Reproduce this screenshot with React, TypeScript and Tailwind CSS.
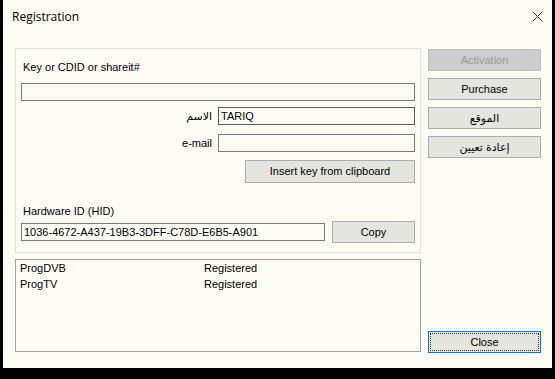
const body = "font-['Liberation_Sans','DejaVu_Sans',sans-serif]";

function Input({ w, value, dark }: { w: string; value?: string; dark?: boolean }) {
  return (
    <div
      className={`${w} h-[18px] border ${dark ? "border-[#5a5a5a]" : "border-[#7a7a7a]"} bg-[#fdfdf5] flex items-center px-[2px] text-[11px] text-black leading-none`}
    >
      {value}
    </div>
  );
}

function Button({
  label,
  className = "",
  disabled,
}: {
  label: string;
  className?: string;
  disabled?: boolean;
}) {
  return (
    <div
      className={`flex items-center justify-center text-[11px] leading-none border ${
        disabled
          ? "bg-[#cccccc] border-[#bfbfbf] text-[#9a9a9a]"
          : "bg-[#e4e5df] border-[#adadad] text-black"
      } ${className}`}
    >
      {label}
    </div>
  );
}

export default function App() {
  return (
    <div className={`w-[555px] h-[379px] bg-black ${body}`}>
      <div className="ml-[3px] w-[549px] h-[368px] bg-[#fdfdf5] flex flex-col">
        {/* title bar */}
        <div className="h-[48px] flex items-start justify-between">
          <span className="mt-[10px] ml-[9px] text-[12px] text-black font-['Open_Sans','DejaVu_Sans',sans-serif] leading-[14px]">
            Registration
          </span>
          <svg width="11" height="11" viewBox="0 0 11 11" className="mt-[11px] mr-[9px]">
            <path d="M0.5 0.5 L10.5 10.5 M10.5 0.5 L0.5 10.5" stroke="#333" strokeWidth="1" fill="none" />
          </svg>
        </div>

        <div className="flex ml-[12px] gap-[7px]">
          {/* left column */}
          <div className="w-[406px] flex flex-col">
            <div className="h-[205px] border border-[#e2e2da] px-[5px] flex flex-col">
              <span className="mt-[12px] ml-[2px] text-[11px] leading-[13px] text-black">
                Key or CDID or shareit#
              </span>
              <div className="mt-[9px]">
                <Input w="w-[394px]" />
              </div>
              <div className="mt-[6px] flex justify-end items-center gap-[6px]">
                <span className="text-[11px] text-black leading-none" dir="rtl">
                  الاسم
                </span>
                <Input w="w-[197px]" value="TARIQ" dark />
              </div>
              <div className="mt-[9px] flex justify-end items-center gap-[6px]">
                <span className="text-[11px] text-black leading-none">e-mail</span>
                <Input w="w-[197px]" />
              </div>
              <div className="mt-[8px] flex justify-end">
                <Button label="Insert key from clipboard" className="w-[170px] h-[23px]" />
              </div>
              <span className="mt-[22px] ml-[2px] text-[11px] leading-[13px] text-black">
                Hardware ID (HID)
              </span>
              <div className="mt-[3px] flex items-center gap-[7px]">
                <Input w="w-[304px]" value="1036-4672-A437-19B3-3DFF-C78D-E6B5-A901" />
                <Button label="Copy" className="w-[83px] h-[22px]" />
              </div>
            </div>
            <div className="mt-[6px] h-[93px] border border-[#a0a0a0] pl-[4px] text-[11px] text-black">
              {[
                ["ProgDVB", "Registered"],
                ["ProgTV", "Registered"],
              ].map(([name, status]) => (
                <div key={name} className="flex h-[16px] items-center leading-none">
                  <span className="w-[184px]">{name}</span>
                  <span>{status}</span>
                </div>
              ))}
            </div>
          </div>

          {/* right column */}
          <div className="w-[113px] flex flex-col pt-[1px]">
            <div className="flex flex-col gap-[7px]">
              <Button label="Activation" className="h-[22px]" disabled />
              <Button label="Purchase" className="h-[22px]" />
              <Button label="الموقع" className="h-[22px]" />
              <Button label="إعادة تعيين" className="h-[22px]" />
            </div>
            <div className="mt-[173px] h-[22px] border border-[#0078d7] bg-[#e4e5df] flex">
              <div className="flex-1 m-[1px] border border-dotted border-[#333] flex items-center justify-center text-[11px] leading-none text-black">
                Close
              </div>
            </div>
          </div>
        </div>
      </div>
    </div>
  );
}
